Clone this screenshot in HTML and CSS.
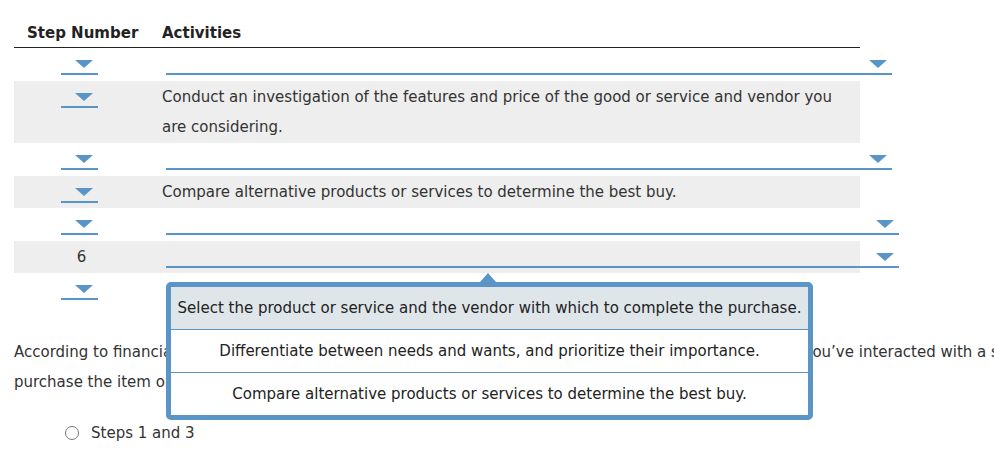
FILE: index.html
```html
<!DOCTYPE html>
<html lang="en">
<head>
    <meta charset="UTF-8">
    <meta name="viewport" content="width=device-width, initial-scale=1.0">
    <title>Buying Process Steps</title>
    <link rel="stylesheet" href="styles.css">
</head>
<body>
    <table class="steps">
        <colgroup>
            <col class="col-step">
            <col class="col-activity">
        </colgroup>
        <thead>
            <tr>
                <th>Step Number</th>
                <th>Activities</th>
            </tr>
        </thead>
        <tbody>
            <tr>
                <td class="step"><span class="select step-select"></span></td>
                <td><span class="select activity-select"></span></td>
            </tr>
            <tr class="shaded">
                <td class="step"><span class="select step-select"></span></td>
                <td>Conduct an investigation of the features and price of the good or service and vendor you are considering.</td>
            </tr>
            <tr>
                <td class="step"><span class="select step-select"></span></td>
                <td><span class="select activity-select"></span></td>
            </tr>
            <tr class="shaded">
                <td class="step"><span class="select step-select"></span></td>
                <td>Compare alternative products or services to determine the best buy.</td>
            </tr>
            <tr>
                <td class="step"><span class="select step-select"></span></td>
                <td><span class="select activity-select wide"></span></td>
            </tr>
            <tr class="shaded">
                <td class="step">6</td>
                <td><span class="select activity-select wide"></span></td>
            </tr>
            <tr>
                <td class="step"><span class="select step-select"></span></td>
                <td class="menu-cell">
                    <!-- open dropdown for the last activity -->
                    <ul class="menu">
                        <li class="active">Select the product or service and the vendor with which to complete the purchase.</li>
                        <li>Differentiate between needs and wants, and prioritize their importance.</li>
                        <li>Compare alternative products or services to determine the best buy.</li>
                    </ul>
                </td>
            </tr>
        </tbody>
    </table>

    <p class="question">According to financial planning experts, which step of the buying process should you complete just after you’ve interacted with a salesperson and decided to<br>purchase the item or service you want?</p>

    <label class="option"><span class="radio"></span>Steps 1 and 3</label>
</body>
</html>
```

FILE: styles.css
```css
body {
    font-family: "DejaVu Sans", Verdana, sans-serif;
    font-size: 15px;
    color: #333;
    margin: 0;
    padding: 19px 0 0 14px;
    overflow: hidden;
    width: 1200px;
}

.steps {
    width: 846px;
    table-layout: fixed;
    border-collapse: collapse;
}

.col-step {
    width: 135px;
}

.steps th {
    text-align: left;
    font-weight: bold;
    color: #222;
    line-height: 28px;
    padding: 0 13px;
    white-space: nowrap;
    border-bottom: 1px solid #222;
}

.steps td {
    height: 30px;
    line-height: 30px;
    padding: 1.25px 13px;
    vertical-align: top;
}

.steps .shaded td {
    background: #eeeeee;
}

.steps td.step {
    text-align: center;
}

.select {
    display: block;
    position: relative;
    height: 24px;
    border-bottom: 2px solid #5a95c8;
}

.select::after {
    content: "";
    position: absolute;
    right: 5px;
    bottom: 5px;
    border-left: 9px solid transparent;
    border-right: 9px solid transparent;
    border-top: 8px solid #5a95c8;
}

.step-select {
    width: 37px;
    margin-left: 34px;
}

.activity-select {
    width: 726px;
    margin-left: 4px;
}

.activity-select.wide {
    width: 733px;
}

.menu-cell {
    position: relative;
}

.menu {
    position: absolute;
    top: 8.5px;
    left: 17px;
    z-index: 2;
    width: 637px;
    margin: 0;
    padding: 0;
    list-style: none;
    background: #fff;
    border: 5px solid #5a95c8;
    border-radius: 5px;
    color: #222;
}

.menu::before {
    content: "";
    position: absolute;
    top: -14px;
    left: 309px;
    border-left: 8px solid transparent;
    border-right: 8px solid transparent;
    border-bottom: 9px solid #5a95c8;
}

.menu li {
    padding: 6px 4px;
    line-height: 30px;
    text-align: center;
    white-space: nowrap;
    border-bottom: 1px solid #5a95c8;
}

.menu li:last-child {
    border-bottom: none;
}

.menu li.active {
    background: #dfe6ea;
}

.question {
    margin: 31px 0 0;
    line-height: 30px;
    white-space: nowrap;
}

.option {
    display: flex;
    align-items: center;
    gap: 12px;
    margin: 21px 0 0 51px;
    line-height: 30px;
}

.radio {
    width: 12px;
    height: 12px;
    border: 1px solid #767676;
    border-radius: 50%;
}
```
